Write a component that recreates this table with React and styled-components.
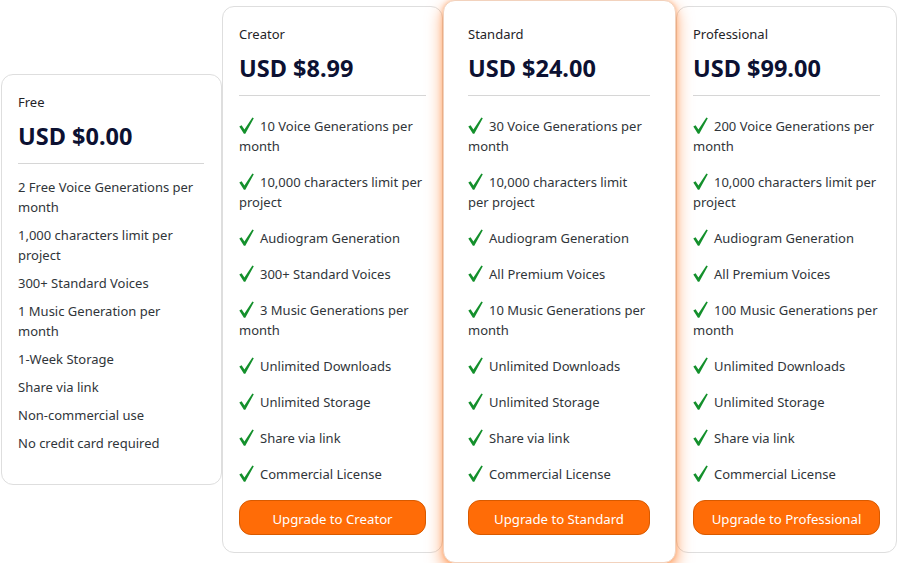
import React from "react";
import styled, { createGlobalStyle } from "styled-components";

const Global = createGlobalStyle`
  html, body { margin: 0; padding: 0; background: #ffffff; }
  body { font-family: "Noto Sans", "Open Sans", sans-serif; color: #2f3337; }
`;

const Row = styled.div`
  display: flex;
  align-items: flex-start;
  padding-left: 1px;
  width: 898px;
`;

const Card = styled.div`
  position: relative;
  z-index: ${(p) => (p.$featured ? 2 : 1)};
  box-sizing: border-box;
  width: ${(p) => p.$w}px;
  margin-top: ${(p) => p.$top}px;
  padding: ${(p) => p.$pad};
  background: #fff;
  border: 1px solid ${(p) => (p.$featured ? "#f2d2bd" : "#dedede")};
  border-radius: 12px;
  box-shadow: ${(p) =>
    p.$featured
      ? "0 7px 16px 1px rgba(255, 100, 0, 0.55), 0 0 5px rgba(255, 120, 30, 0.4)"
      : "none"};
`;

const Title = styled.div`
  font-size: 13px;
  line-height: 20px;
  color: #1f2328;
`;

const Price = styled.div`
  margin-top: 9px;
  font-size: 23.5px;
  line-height: 30px;
  font-weight: 700;
  color: #0c1132;
`;

const Divider = styled.hr`
  margin: 12px 0 0;
  border: 0;
  border-top: 1px solid #d6d6d6;
`;

const List = styled.ul`
  list-style: none;
  margin: ${(p) => (p.$plain ? "13px 0 15px" : "20px 0 0")};
  padding: 0;
  display: flex;
  flex-direction: column;
  gap: ${(p) => (p.$plain ? 8 : 16)}px;
`;

const Item = styled.li`
  font-size: 13px;
  line-height: 20px;
  color: #30353a;
`;

const CheckSvg = styled.svg`
  display: inline-block;
  width: 15px;
  height: 17px;
  margin-right: 6px;
  vertical-align: -3px;
  fill: #14902c;
`;

const Check = () => (
  <CheckSvg viewBox="0 0 15 17" aria-hidden="true">
    <path d="M0.3 9.6 L2.6 8.2 L5.4 12.6 L13.4 0.4 L14.8 1.3 L6.3 16.7 L4.9 16.7 Z" />
  </CheckSvg>
);

const Button = styled.button`
  display: block;
  width: 100%;
  height: 35px;
  margin-top: 16px;
  padding: 2px 0 0;
  border: 1px solid #d85a00;
  border-radius: 12px;
  background: #ff6c07;
  color: #fff;
  font-family: "Noto Sans", "Open Sans", sans-serif;
  font-size: 13.2px;
  cursor: pointer;
`;

const plans = [
  {
    name: "Free",
    price: "USD $0.00",
    w: 221,
    top: 74,
    pad: "17px 17px 16px 16px",
    plain: true,
    items: [
      "2 Free Voice Generations per month",
      "1,000 characters limit per project",
      "300+ Standard Voices",
      "1 Music Generation per month",
      "1-Week Storage",
      "Share via link",
      "Non-commercial use",
      "No credit card required",
    ],
  },
  {
    name: "Creator",
    price: "USD $8.99",
    w: 221,
    top: 6,
    pad: "17px 16px 17px 16px",
    items: [
      "10 Voice Generations per month",
      "10,000 characters limit per project",
      "Audiogram Generation",
      "300+ Standard Voices",
      "3 Music Generations per month",
      "Unlimited Downloads",
      "Unlimited Storage",
      "Share via link",
      "Commercial License",
    ],
    button: "Upgrade to Creator",
  },
  {
    name: "Standard",
    price: "USD $24.00",
    w: 233,
    top: 0,
    pad: "23px 25px 27px 24px",
    featured: true,
    items: [
      "30 Voice Generations per month",
      "10,000 characters limit per project",
      "Audiogram Generation",
      "All Premium Voices",
      "10 Music Generations per month",
      "Unlimited Downloads",
      "Unlimited Storage",
      "Share via link",
      "Commercial License",
    ],
    button: "Upgrade to Standard",
  },
  {
    name: "Professional",
    price: "USD $99.00",
    w: 221,
    top: 6,
    pad: "17px 16px 17px 16px",
    items: [
      "200 Voice Generations per month",
      "10,000 characters limit per project",
      "Audiogram Generation",
      "All Premium Voices",
      "100 Music Generations per month",
      "Unlimited Downloads",
      "Unlimited Storage",
      "Share via link",
      "Commercial License",
    ],
    button: "Upgrade to Professional",
  },
];

export default function App() {
  return (
    <>
      <Global />
      <Row>
        {plans.map((p) => (
          <Card key={p.name} $w={p.w} $top={p.top} $pad={p.pad} $featured={p.featured}>
            <Title>{p.name}</Title>
            <Price>{p.price}</Price>
            <Divider />
            <List $plain={p.plain}>
              {p.items.map((it) => (
                <Item key={it}>
                  {!p.plain && <Check />}
                  {it}
                </Item>
              ))}
            </List>
            {p.button && <Button>{p.button}</Button>}
          </Card>
        ))}
      </Row>
    </>
  );
}
